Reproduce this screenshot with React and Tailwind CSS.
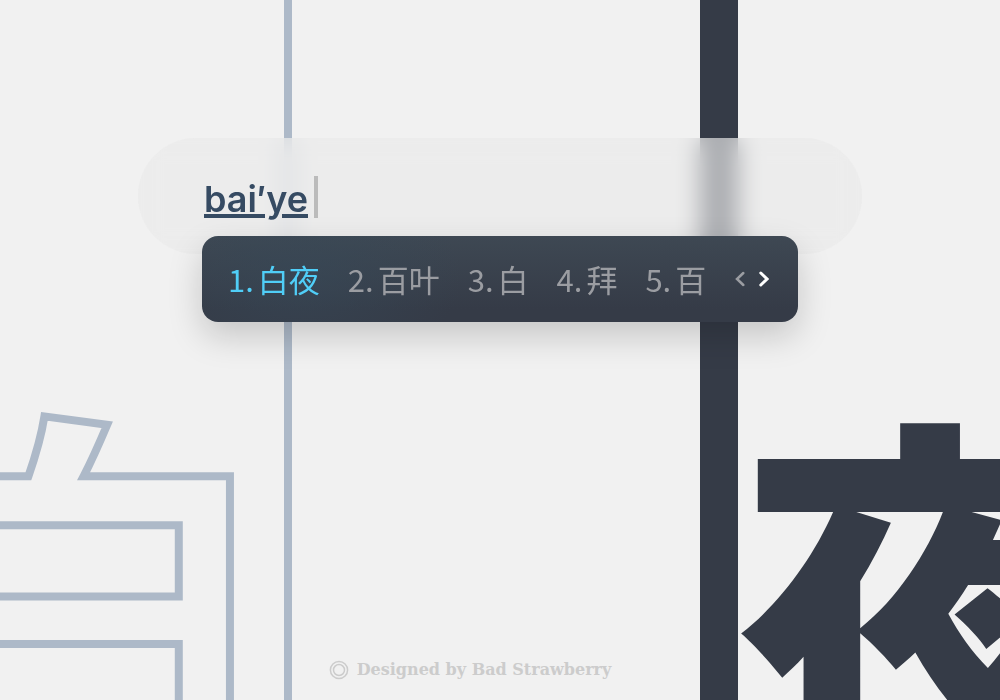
import { useState } from "react";

const candidates = ["白夜", "百叶", "白", "拜", "百"];

function Backdrop() {
  return (
    <div
      lang="ja"
      className="absolute inset-0 flex overflow-hidden font-['Noto_Sans_CJK_JP',sans-serif] leading-none"
    >
      <div className="flex w-[29.2%] items-end justify-end border-r-8 border-[#adb9c8]">
        <span className="-mb-[84px] mr-[6px] whitespace-nowrap text-[400px] font-bold text-[#f1f1f1] [-webkit-text-stroke:8px_#adb9c8]">
          白
        </span>
      </div>
      <div className="grow" />
      <div className="flex w-[30%] items-end border-l-[38px] border-[#353b47]">
        <span className="-mb-[80px] whitespace-nowrap text-[388px] font-black text-[#353b47]">夜</span>
      </div>
    </div>
  );
}

function Chevron({ d, width, className }) {
  return (
    <svg viewBox="0 0 10 16" className={className} fill="none" stroke="currentColor" strokeWidth={width}>
      <path d={d} strokeLinecap="round" strokeLinejoin="miter" />
    </svg>
  );
}

function Candidates({ selected, onSelect }) {
  return (
    <div className="absolute inset-x-16 top-[98px] flex h-[86px] items-center rounded-2xl bg-[radial-gradient(ellipse_160px_100px_at_100px_40px,#37495899,transparent),linear-gradient(#3e4853,#353b47_85%)] pl-[26px] pr-[29px] shadow-[0_14px_34px_rgba(0,0,0,0.18)]">
      <div className="flex grow items-center gap-7 font-['Noto_Sans_CJK_SC',sans-serif] text-[31px] leading-10 font-normal">
        {candidates.map((word, i) => (
          <button
            key={i}
            type="button"
            onClick={() => onSelect(i)}
            className={i === selected ? "flex gap-1 text-[#50cef7]" : "flex gap-1 text-[#9b9da2]"}
          >
            <span>{i + 1}.</span>
            <span>{word}</span>
          </button>
        ))}
      </div>
      <div className="flex gap-[14px]">
        <button type="button" aria-label="Previous page" className="text-[#9b9da2]">
          <Chevron className="h-4 w-[10px]" width={2.5} d="M8.300 2 2 8l6.300 6" />
        </button>
        <button type="button" aria-label="Next page" className="text-white">
          <Chevron className="h-4 w-[10px]" width={3} d="M1.800 2 8 8l-6.200 6" />
        </button>
      </div>
    </div>
  );
}

export default function App() {
  const [text, setText] = useState("bai′ye");
  const [selected, setSelected] = useState(0);
  return (
    <main className="relative flex min-h-screen flex-col items-center justify-between overflow-hidden bg-[#f1f1f1] pt-[138px]">
      <Backdrop />
      <div className="relative w-full max-w-[724px]">
        <div className="flex h-[116px] items-center rounded-full bg-[#e9e9e9]/65 pl-[66px] pt-[6px] backdrop-blur-[12px]">
          <input
            aria-label="Pinyin"
            value={text}
            onChange={(e) => setText(e.target.value)}
            className="field-sizing-content bg-transparent font-['Inter',sans-serif] text-[36px] leading-[44px] font-semibold text-[#364b63] underline decoration-4 underline-offset-2 caret-transparent outline-none"
          />
          <span className="mb-1 ml-[6px] h-[42px] w-1 bg-[#bbbbbb]" />
        </div>
        <Candidates selected={selected} onSelect={setSelected} />
      </div>
      <footer className="relative flex items-center gap-2 pb-[18px] pr-[60px] text-[#cccccc]">
        <svg viewBox="0 0 20 20" className="size-5" fill="none" stroke="currentColor" strokeWidth="1.5">
          <circle cx="10" cy="10" r="8.600" />
          <circle cx="10" cy="10" r="5.500" />
        </svg>
        <p className="font-['DejaVu_Serif',serif] text-[16px] leading-6 font-bold">Designed by Bad Strawberry</p>
      </footer>
    </main>
  );
}
